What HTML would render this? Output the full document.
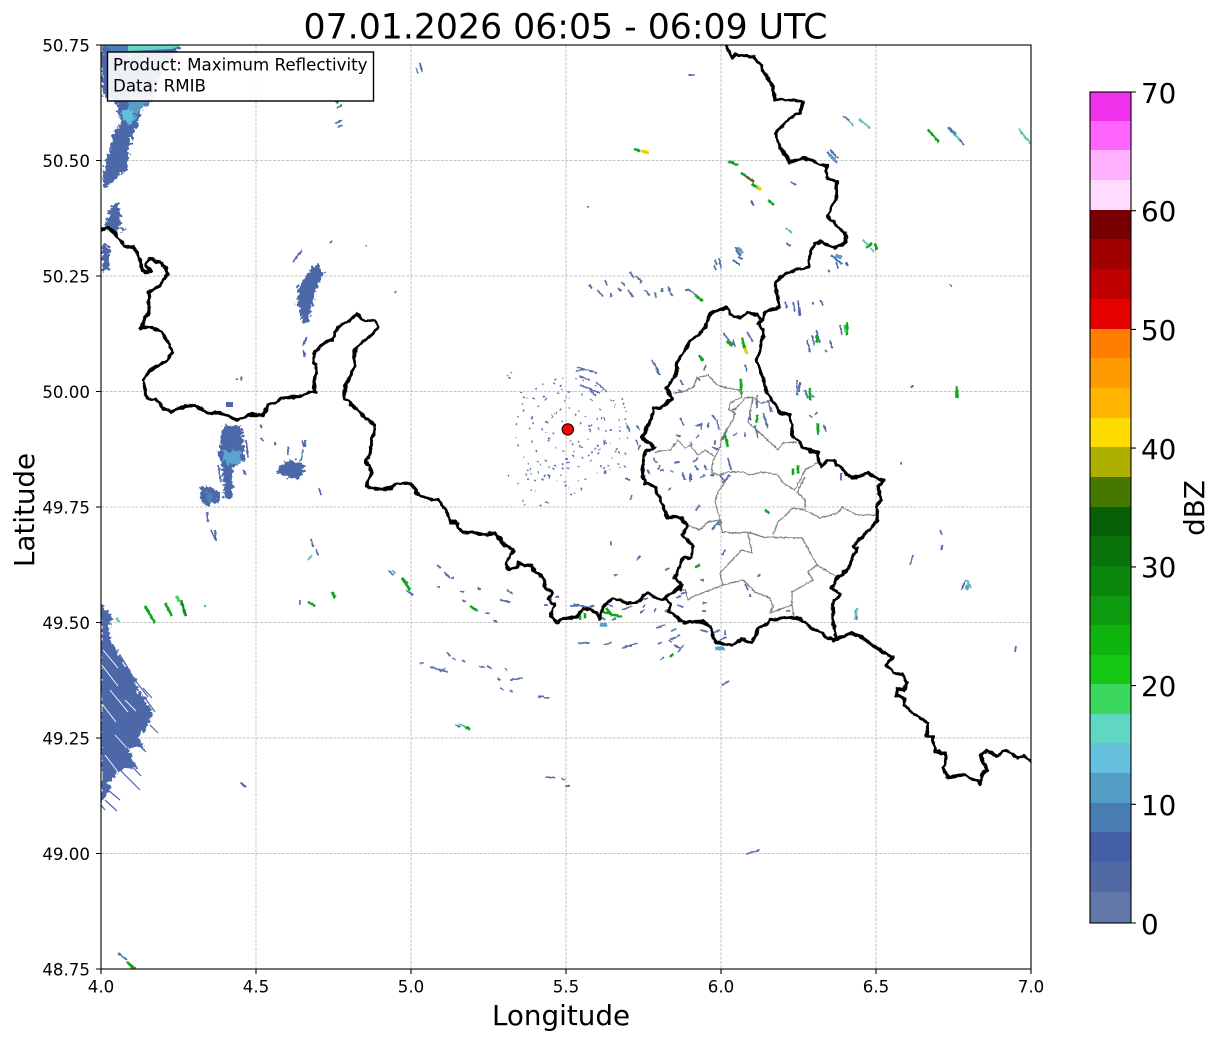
<!DOCTYPE html>
<html><head><meta charset="utf-8"><title>Radar</title>
<style>html,body{margin:0;padding:0;background:#fff}svg{display:block}text{font-family:"DejaVu Sans","Liberation Sans",sans-serif;fill:#000}</style>
</head><body>
<svg width="1219" height="1040" viewBox="0 0 1219 1040" xmlns="http://www.w3.org/2000/svg">
<defs>
<clipPath id="ax"><rect x="101" y="45" width="930" height="924"/></clipPath>
<filter id="rb" filterUnits="userSpaceOnUse" x="0" y="0" width="1219" height="1040"><feTurbulence type="fractalNoise" baseFrequency=".28" numOctaves="2" seed="4"/><feDisplacementMap in="SourceGraphic" scale="9" xChannelSelector="R" yChannelSelector="G"/></filter>
<filter id="re" filterUnits="userSpaceOnUse" x="0" y="0" width="1219" height="1040"><feTurbulence type="fractalNoise" baseFrequency=".4" numOctaves="1" seed="9"/><feDisplacementMap in="SourceGraphic" scale="2.5" xChannelSelector="R" yChannelSelector="G"/></filter>
<filter id="rc" filterUnits="userSpaceOnUse" x="0" y="0" width="1219" height="1040"><feTurbulence type="fractalNoise" baseFrequency=".13" numOctaves="2" seed="7"/><feDisplacementMap in="SourceGraphic" scale="5" xChannelSelector="R" yChannelSelector="G"/></filter>
</defs>
<rect width="1219" height="1040" fill="#fff"/>
<text x="565.5" y="38.5" font-size="34.7" text-anchor="middle">07.01.2026 06:05 - 06:09 UTC</text>
<path d="M256 45V969M411 45V969M566 45V969M721 45V969M876 45V969M101 160.5H1031M101 276H1031M101 391.5H1031M101 507H1031M101 622.5H1031M101 738H1031M101 853.5H1031" stroke="#b4b4b4" stroke-width=".8" stroke-dasharray="3 1.3" fill="none"/>
<g clip-path="url(#ax)">
<!-- large fills -->
<g filter="url(#rb)">
<g fill="#4d68a9">
<path d="M101 45H182L170 58L158 80L152 100L140 112L138 125L133 133L128 155L127 170L112 182L103 188L103 170L110 150L112 135L122 122L115 101L103 97L101 60Z"/>
<path d="M112 204L118 203L121 225L125 230L114 232L105 227Z"/>
<path d="M101 245L112 247L108 258L109 268L103 272Z"/>
<path d="M318 263L323 275L315 293L308 322L303 323L297 303L298 287L310 270Z"/>
<path d="M223 425L242 427L245 460L233 467L233 497L225 498L222 467L218 453Z"/>
<path d="M200 487L207 485L220 492L218 503L203 505Z"/>
<path d="M285 462L300 460L306 472L297 480L285 477L276 472Z"/>
<path d="M101 603L112 617L108 633L120 657L135 677L138 690L152 710L150 723L138 737L145 750L128 747L137 767L122 770L108 783L112 787L101 803Z"/>
</g>
<path d="M222 450L241 452L241 463L226 465Z" fill="#5aa5d0"/>
<path d="M205 490L213 495L212 502L206 500Z" fill="#4c7fb8"/>
<path d="M130 92L153 94L142 110L126 118Z" fill="#5a9ec8"/>
<path d="M120 112L130 108L136 118L128 125Z" fill="#62c0dc"/>
</g>
<path d="M226 402H233V407H226Z" fill="#4d68a9"/>
<path d="M128 45H182L172 49L128 51Z" fill="#5fd7c3"/>
<path d="M104 45H128L128 51L112 52Z" fill="#4c7fb8"/>
<!-- white gaps on left blob -->
<path d="M103 650L118 668M101 664L118 686M110 690L128 712M102 704L116 722M115 735L127 748M105 755L118 772M125 700L136 711" stroke="#fff" stroke-width=".9" fill="none"/>
<path d="M120 655L128 668M135 680L148 697M143 688L152 698M150 725L158 733M128 735L146 752M117 750L141 776M120 770L140 790M105 800L117 811M108 790L120 800M145 698L155 712M101 805L105 810" stroke="#4d68a9" stroke-width="1.2" fill="none"/>
<g filter="url(#re)">
<!-- small blue echoes -->
<path fill="none" stroke="#4f6aa9" stroke-width="1.8" d="M293 262L302 250M303 345L307 337M305 357L303 350M330 243L332 241M365 246L367 246M396 291L395 293M237 380L237 378M241 380L242 377M226 425V440M236 425V445M246 440L248 458M218 465L221 482M243 470L246 475M215 530L216 540M207 512L208 522M260 425L262 428M261 438L263 441M275 445V442M302 440L304 447M301 461L303 449M288 447V455M305 447V440M311 539L313 547M316 549L318 555M319 488L321 495M337 108L342 105M335 124L342 120M338 127L342 125M420 63L422 72M416 68L418 73M688 75H695M843 116L850 121M751 201L754 206M791 182L796 185M948 127L956 136M958 138L964 145M827 152L837 163M830 150L838 158M735 247L743 253M738 257L743 259M733 260L740 265M719 258L721 268M714 265L716 270M786 243L790 246M831 255L842 264M836 262L838 268M846 262L848 266M828 270L830 272M587 207L589 206M793 302L795 312M798 300L800 316M785 302L787 308M813 302V305M820 300L823 305M812 335L814 345M816 330L820 343M807 340L810 352M825 350L827 352M830 340L832 348M840 325L842 335M797 380V395M800 382L799 392M805 390L808 398M812 395L814 398M815 415L817 412M818 427V435M824 425L826 432M810 415L812 418M912 385V388M901 462V465M950 284L952 287M841 480V473M855 610L857 620M1016 646L1015 652M913 555L910 565M940 530L942 535M941 550L943 545M961 590L966 580M746 854L760 850M565 786H570M546 777L555 778M561 778L565 780M241 783L246 787M211 530L216 541M300 600V605"/>
<!-- scatter around the radar -->
<path fill="none" stroke="#5a72ad" stroke-width="1.5" d="M577 367L597 373M576 371L585 369M579 376L590 380M596 382L607 392M580 385L600 393M590 390L596 396"/>
<path fill="none" stroke="#5a72ad" stroke-width="1.5" stroke-dasharray="2 2.5" d="M509 377L510 380M507 376L512 372M523 397L526 399M520 393L524 392M533 398L536 400M543 396L547 398M560 385L562 390M553 383L556 385M565 397L570 398M552 418L555 414M556 412L558 415M564 400L566 403M542 430L544 426M532 423L536 424M523 411L525 409M553 432L555 436M562 420L563 424M575 414L578 417M580 422L582 425M589 430L592 424M598 428L601 431M597 418V422M601 417L603 420M610 430L614 431M605 443H610M613 400L616 405M622 398L626 412M625 418L628 430M627 437L629 441M616 448L620 454M625 453L627 457M588 456L596 448M597 445L600 450M604 443L606 447M582 457L584 460M570 440L573 445M578 441L580 447M566 458L570 464M562 468L566 470M548 467L555 469M537 461L541 465M530 468L532 472M527 470L532 474M522 500L525 505M517 483L520 486M530 490L535 491M540 505L544 507M508 475L510 477M526 474L528 480M534 480L538 482M542 480L545 475M600 466L605 468M608 465L610 470M618 463L620 468M624 466L627 468M565 485L569 488M570 495L575 493M581 490L583 486M572 455L575 458M545 422H548M548 438L552 440M562 465L568 462M560 475H563"/>
<circle cx="568" cy="430" r="22" fill="none" stroke="#5a72ad" stroke-width="1.4" stroke-dasharray="2 7 1 9"/>
<circle cx="568" cy="430" r="38" fill="none" stroke="#5a72ad" stroke-width="1.4" stroke-dasharray="2 8 3 11"/>
<circle cx="568" cy="430" r="52" fill="none" stroke="#5a72ad" stroke-width="1.4" stroke-dasharray="2 6 1 12"/>
<!-- area scatter top middle -->
<path fill="none" stroke="#56709f" stroke-width="1.8" d="M589 285L592 288M597 290L603 296M605 280L607 285M611 293V297M618 288L621 291M630 272L634 278M636 276L640 280M641 280V284M628 290L633 297M622 282L625 286M645 290L650 296M655 292L656 298M662 288V292M668 287L670 292M670 293L673 296M685 290H690M690 290L698 297M652 360L659 372M656 370L660 375M715 260L717 265M736 250L741 256"/>
<!-- Luxembourg-area blue -->
<path fill="none" stroke="#5570aa" stroke-width="1.8" d="M747 332L753 342M723 333L733 345M733 340L735 347M706 365L704 370M680 380L683 385M678 390L682 392M692 388L695 385M696 377L700 380M695 426L703 424M701 424V430M708 423V428M680 418L684 425M690 442L692 445M699 435L696 438M717 420L719 430M712 415L716 420M745 365L747 372M763 413L768 428M768 400L771 412M750 410V420M757 395V408M745 432V437M755 425L758 438M733 436L737 433M732 410L736 408M715 440V445M727 430L722 440M719 450L712 447M653 458L657 463M647 470L650 474M660 465L658 470M670 470L673 472M668 490L671 488M674 463L680 462M682 472L685 480M693 462L698 458M704 465L707 470M728 458L731 470M720 475L723 480M710 475H714M690 475V482M676 435L681 437M695 466L698 470M690 473L692 480M700 478L705 475M730 475L722 483M700 505L696 510M718 525L722 522M712 530L720 520M722 555L725 550M703 603L707 603M640 477H645M632 495L630 500M660 470H664M650 443L652 447M636 425L640 430M640 445L638 450M636 440L638 445M627 425L630 432M605 470V474M630 480L625 478"/>
<!-- south blue -->
<path fill="none" stroke="#5670aa" stroke-width="1.7" d="M388 570L393 575M402 578L408 583M406 590L413 595M437 565L441 568M444 572L450 578M451 578H454M437 587H440M462 600L466 602M470 606L478 611M486 613L490 613M497 622L493 620M460 591L464 592M478 588L481 590M507 590L513 594M500 600L510 602M493 620L497 623M420 663H424M430 667L448 672M440 672L445 668M447 652L450 656M452 658L456 660M462 660L465 662M479 666L485 668M487 666L492 669M505 668L507 671M497 678L500 680M510 680L523 678M500 688L504 690M510 690L513 692M538 697L544 696M544 698H550M455 725L460 727M550 478L548 474M545 502L549 503M547 598L552 600M544 605H548M555 597H559M570 606H578M574 604L590 608M590 607L594 606M608 605L613 606M612 620L616 618M600 616L605 620M622 610L632 606M640 613L645 610M654 612L656 608M665 612L670 608M656 628L665 625M671 631L676 629M670 640L680 635M674 645L680 648M678 652L684 645M660 660L664 657M668 640L672 642M658 644L662 642M700 630L708 632M713 633L720 630M702 611H706M578 643H590M604 645L612 642M622 648L638 643M625 646L632 646M722 685L729 681M725 630V635M720 640L726 637M745 584L748 590M758 577L760 574M786 611H790M750 594V597M700 580H704M640 600L648 598M643 607L645 605M681 594L687 592M676 598L681 596M665 570L669 568M611 541V545M677 605L683 607M637 560L640 556M614 575H618"/>
<!-- top right echoes teal -->
<path fill="none" stroke="#5fc4b8" stroke-width="2" d="M849 120L853 126M859 119L870 128M953 132L960 140M1019 129L1025 137M1025 137L1031 144M786 228L792 233M863 240L870 247M866 243L874 252M459 724L466 727M967 580L971 588M308 560L312 555M717 647L725 650M204 605L206 607M117 618L119 622M857 608L855 620M392 570L396 574"/>
<path fill="none" stroke="#5a9ec8" stroke-width="3.5" d="M829 154L835 160M738 248L742 252M600 625L607 625M715 649L724 648M835 255L842 258M968 585L966 590"/>
<!-- green echoes -->
<path fill="none" stroke="#0fa51e" stroke-width="2.6" d="M928 130L939 142M728 161L738 165M752 184L758 188M768 200L774 205M866 248L872 243M875 243L877 250M727 341L732 346M742 338L745 350M699 355L703 361M741 379V395M757 415V423M725 435L728 447M818 423V433M810 388V400M847 322V335M817 335V343M793 468V475M798 465V473M957 386V398M765 510L769 513M695 295L703 301M308 602L315 606M332 592L335 598M402 578L410 590M470 606L476 610M465 727L470 729M145 606L155 623M165 603L172 616M580 612V620M585 613V618M603 612L622 617M606 608L612 616M670 657L673 654M634 149L640 151M695 567L700 565M127 962L135 969M335 100L338 103"/>
<path fill="none" stroke="#0f8c20" stroke-width="2.6" d="M181 600L186 616M741 173L746 176"/>
<path fill="none" stroke="#70551e" stroke-width="2.6" d="M746 176L754 182"/>
<path fill="none" stroke="#3cd75f" stroke-width="2.6" d="M176 596L180 602M844 325L846 332"/>
<path fill="none" stroke="#e6d000" stroke-width="2.8" d="M641 151L649 153M757 186L761 190M745 348L747 354"/>
<path fill="none" stroke="#4a7cb4" stroke-width="2" d="M118 953L127 960M948 127L956 134"/>
</g>
</g>
<!-- province borders -->
<g fill="none" stroke="#808080" stroke-width="1.25" stroke-linejoin="round" filter="url(#re)">
<path d="M673 393L683 392L693 387L697 378L708 375L717 385L727 388L740 390L742 397L730 403L729 410L735 413L733 420L722 437L720 447L715 457L712 465V473L720 475L728 472L743 472L750 475L763 472L778 475L783 483L795 490L805 470L817 463"/>
<path d="M655 452L670 450L678 440L685 448L690 445L698 455L705 450L715 457"/>
<path d="M733 412L745 398L753 397L760 403L768 402L773 412M753 397L748 422L760 433L778 450L783 443L797 442"/>
<path d="M728 478L718 492L715 502L720 520L708 522L700 530L687 525M720 520L722 532L737 533L748 532L763 537L802 538L817 565L837 577M748 533L752 553L742 550L735 557L720 573L723 585L692 597L688 600L685 590L682 590M723 585L743 580L755 592L770 598L773 607L770 613L792 605L794 617M792 605L792 592L813 580L808 572L817 565M773 535L778 522L793 508L805 510L820 518L838 513L842 507L857 515L877 515M805 510L805 500L797 492L805 477"/>
</g>
<!-- country borders -->
<g clip-path="url(#ax)"><g fill="none" stroke="#000" stroke-width="3.2" stroke-linejoin="round" stroke-linecap="round" filter="url(#rc)">
<path d="M99 231L108 227L115 233L125 247L133 247L140 257L140 267L145 272L152 272L145 265L150 259L155 261L162 263L169 273L160 285L148 293L150 307L145 320L140 328L150 327L161 332L170 345L172 353L165 362L150 370L143 380L145 390L147 398L155 400L163 408L170 411L180 408L195 405L208 413L220 413L238 420L250 415L262 415L268 405L277 403L283 398L298 397L308 393L316 392L314 382L317 365L313 362L313 355L320 346L333 339L338 327L350 320L357 314L365 320L375 320L378 327L372 335L360 343L354 352L355 365L351 375L345 385L345 400L358 410L365 418L375 425L372 440L370 455L366 460L372 473L366 487L382 490L392 488L395 484L410 483L417 493L432 500L439 499L448 515L450 523L457 522L462 532L475 533L487 535L494 532L503 543L514 551L506 562L508 570L517 567L518 562L532 567L543 579L547 590L552 592L548 598L555 605L550 613L557 623L562 619L578 616L583 609L590 610L597 613L600 619L603 607L613 598L628 603L638 602L648 593L662 600L673 593L682 585L680 590"/>
<path d="M665 600L670 603L670 612L683 622L702 622L710 625L715 643L733 645L742 638L752 643L758 628L767 625L770 620L797 617L812 628L833 640L852 633L863 638L877 648L892 658L887 665L893 672L902 675L907 683L903 691L897 688L897 695L905 698L904 705L915 715L928 723L926 735L933 737L935 752L945 753L947 758L942 767L948 777L963 775L980 783L983 773L987 770L983 762L980 755L987 750L997 756L1007 750L1018 758L1023 756L1035 764"/>
<path d="M724 43L727 47L732 58L735 55L755 57L765 73L773 87L775 100L792 100L803 102L800 113L790 118L775 133L780 147L790 162L803 158L827 166L827 178L837 182L836 200L827 215L845 233L846 242L833 248L822 242L815 243L810 257L808 267L787 272L775 283L778 300L780 307L766 311L763 320"/>
<path d="M710 313L727 307L730 314L740 318L747 313L757 315L762 321L758 323L763 330L762 340L757 362L763 378L767 393L775 403L780 413L790 415L793 437L807 450L818 453L820 467L827 460L833 460L847 475L857 478L867 473L880 480L884 480L878 487L881 500L876 507L878 520L867 532L853 547L857 548L847 570L838 577L832 587L840 595L832 603L833 617L835 638"/>
<path d="M710 313L705 328L690 342L678 360L675 378L667 388L672 398L663 407L653 408L652 418L642 437L655 448L645 452L642 467L645 483L655 487L668 517L682 517L687 527L682 535L693 545L692 557L683 558L675 578L682 585"/>
</g></g>
<circle cx="567.8" cy="429.4" r="5.7" fill="#f00" stroke="#000" stroke-width="1"/>
<rect x="107.5" y="52" width="266" height="49" fill="#fff" fill-opacity=".9" stroke="#000" stroke-width="1.4"/>
<text x="113" y="70.5" font-size="16.67">Product: Maximum Reflectivity</text>
<text x="113" y="91.7" font-size="16.67">Data: RMIB</text>
<rect x="101" y="45" width="930" height="924" fill="none" stroke="#000" stroke-width="1.1"/>
<path d="M101 969v5M256 969v5M411 969v5M566 969v5M721 969v5M876 969v5M1031 969v5M96 969h5M96 853.5h5M96 738h5M96 622.5h5M96 507h5M96 391.5h5M96 276h5M96 160.5h5M96 45h5" stroke="#000" stroke-width="1.1" fill="none"/>
<g font-size="16.67" text-anchor="middle">
<text x="101" y="992.5">4.0</text><text x="256" y="992.5">4.5</text><text x="411" y="992.5">5.0</text><text x="566" y="992.5">5.5</text><text x="721" y="992.5">6.0</text><text x="876" y="992.5">6.5</text><text x="1031" y="992.5">7.0</text>
</g>
<g font-size="16.67" text-anchor="end">
<text x="90" y="975.5">48.75</text><text x="90" y="860">49.00</text><text x="90" y="744.5">49.25</text><text x="90" y="629">49.50</text><text x="90" y="513.5">49.75</text><text x="90" y="398">50.00</text><text x="90" y="282.5">50.25</text><text x="90" y="167">50.50</text><text x="90" y="51.5">50.75</text>
</g>
<text x="561" y="1025" font-size="27.78" text-anchor="middle">Longitude</text>
<text transform="translate(34 510) rotate(-90)" font-size="27.78" text-anchor="middle">Latitude</text>
<!-- colourbar -->
<g shape-rendering="crispEdges">
<rect x="1090" y="92" width="41" height="30" fill="#f032ec"/>
<rect x="1090" y="121" width="41" height="30" fill="#ff64ff"/>
<rect x="1090" y="150" width="41" height="30" fill="#ffb0ff"/>
<rect x="1090" y="180" width="41" height="31" fill="#ffdcff"/>
<rect x="1090" y="210" width="41" height="30" fill="#780000"/>
<rect x="1090" y="239" width="41" height="31" fill="#a00000"/>
<rect x="1090" y="269" width="41" height="31" fill="#c00000"/>
<rect x="1090" y="299" width="41" height="31" fill="#e60000"/>
<rect x="1090" y="329" width="41" height="30" fill="#ff7d00"/>
<rect x="1090" y="358" width="41" height="31" fill="#ff9b00"/>
<rect x="1090" y="388" width="41" height="31" fill="#ffb400"/>
<rect x="1090" y="418" width="41" height="30" fill="#ffdc00"/>
<rect x="1090" y="447" width="41" height="31" fill="#aeb000"/>
<rect x="1090" y="477" width="41" height="31" fill="#467800"/>
<rect x="1090" y="507" width="41" height="30" fill="#075f07"/>
<rect x="1090" y="536" width="41" height="31" fill="#0a720a"/>
<rect x="1090" y="566" width="41" height="31" fill="#0a860a"/>
<rect x="1090" y="596" width="41" height="30" fill="#0f9b0f"/>
<rect x="1090" y="625" width="41" height="31" fill="#0fb40f"/>
<rect x="1090" y="655" width="41" height="30" fill="#14c814"/>
<rect x="1090" y="684" width="41" height="31" fill="#3cd75f"/>
<rect x="1090" y="714" width="41" height="30" fill="#5fd7c3"/>
<rect x="1090" y="743" width="41" height="31" fill="#64c0dc"/>
<rect x="1090" y="773" width="41" height="31" fill="#549ec6"/>
<rect x="1090" y="803" width="41" height="30" fill="#4a7cb4"/>
<rect x="1090" y="832" width="41" height="31" fill="#4460a6"/>
<rect x="1090" y="862" width="41" height="31" fill="#526aa4"/>
<rect x="1090" y="892" width="41" height="31" fill="#6377a8"/>
</g>
<rect x="1090" y="92" width="41" height="831" fill="none" stroke="#000" stroke-width="1.1"/>
<path d="M1131 92h5M1131 210.7h5M1131 329.4h5M1131 448.1h5M1131 566.9h5M1131 685.6h5M1131 804.3h5M1131 923h5" stroke="#000" stroke-width="1.1"/>
<g font-size="27.78">
<text x="1141" y="103">70</text><text x="1141" y="221">60</text><text x="1141" y="340">50</text><text x="1141" y="459">40</text><text x="1141" y="577">30</text><text x="1141" y="696">20</text><text x="1141" y="815">10</text><text x="1141" y="934">0</text>
</g>
<text transform="translate(1204 508) rotate(-90)" font-size="27.78" text-anchor="middle">dBZ</text>
</svg>
</body></html>
